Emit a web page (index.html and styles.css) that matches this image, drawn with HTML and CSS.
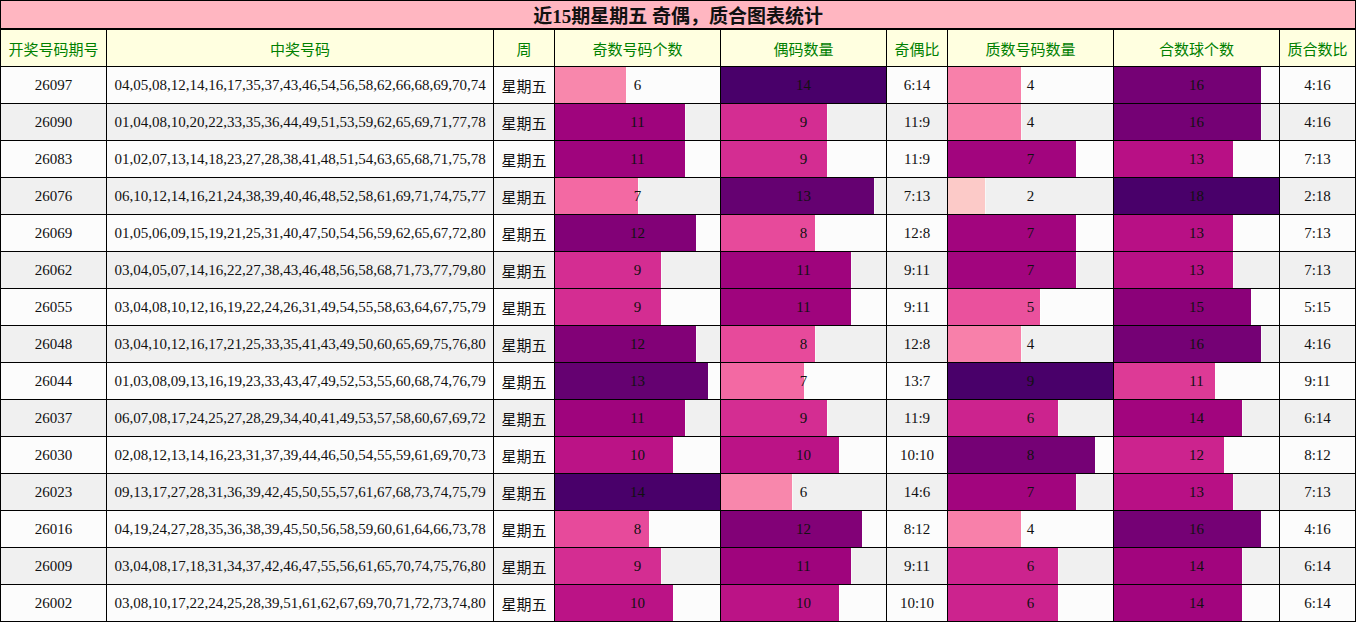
FILE: index.html
```html
<!DOCTYPE html>
<html lang="zh-CN">
<head>
<meta charset="utf-8">
<title>近15期星期五 奇偶，质合图表统计</title>
<link rel="stylesheet" href="styles.css">
</head>
<body>
<table class="stats">
  <colgroup>
    <col class="c-issue"><col class="c-nums"><col class="c-week"><col class="c-bar"><col class="c-bar"><col class="c-ratio"><col class="c-bar"><col class="c-bar"><col class="c-ratio2">
  </colgroup>
  <thead>
    <tr class="title-row"><th colspan="9" class="title">近15期星期五 奇偶，质合图表统计</th></tr>
    <tr class="head-row">
      <th>开奖号码期号</th><th>中奖号码</th><th>周</th><th>奇数号码个数</th><th>偶码数量</th><th>奇偶比</th><th>质数号码数量</th><th>合数球个数</th><th>质合数比</th>
    </tr>
  </thead>
  <tbody>
    <tr><td>26097</td><td>04,05,08,12,14,16,17,35,37,43,46,54,56,58,62,66,68,69,70,74</td><td class="wk">星期五</td>
      <td class="bar" style="--p:42.857%;--c:#f887ac">6</td><td class="bar" style="--p:100%;--c:#49006a">14</td><td>6:14</td>
      <td class="bar" style="--p:44.444%;--c:#f880aa">4</td><td class="bar" style="--p:88.889%;--c:#750175">16</td><td>4:16</td></tr>
    <tr><td>26090</td><td>01,04,08,10,20,22,33,35,36,44,49,51,53,59,62,65,69,71,77,78</td><td class="wk">星期五</td>
      <td class="bar" style="--p:78.571%;--c:#9f047d">11</td><td class="bar" style="--p:64.286%;--c:#d42d92">9</td><td>11:9</td>
      <td class="bar" style="--p:44.444%;--c:#f880aa">4</td><td class="bar" style="--p:88.889%;--c:#750175">16</td><td>4:16</td></tr>
    <tr><td>26083</td><td>01,02,07,13,14,18,23,27,28,38,41,48,51,54,63,65,68,71,75,78</td><td class="wk">星期五</td>
      <td class="bar" style="--p:78.571%;--c:#9f047d">11</td><td class="bar" style="--p:64.286%;--c:#d42d92">9</td><td>11:9</td>
      <td class="bar" style="--p:77.778%;--c:#a2057e">7</td><td class="bar" style="--p:72.222%;--c:#b81085">13</td><td>7:13</td></tr>
    <tr><td>26076</td><td>06,10,12,14,16,21,24,38,39,40,46,48,52,58,61,69,71,74,75,77</td><td class="wk">星期五</td>
      <td class="bar" style="--p:50%;--c:#f369a3">7</td><td class="bar" style="--p:92.857%;--c:#650171">13</td><td>7:13</td>
      <td class="bar" style="--p:22.222%;--c:#fccac8">2</td><td class="bar" style="--p:100%;--c:#49006a">18</td><td>2:18</td></tr>
    <tr><td>26069</td><td>01,05,06,09,15,19,21,25,31,40,47,50,54,56,59,62,65,67,72,80</td><td class="wk">星期五</td>
      <td class="bar" style="--p:85.714%;--c:#820177">12</td><td class="bar" style="--p:57.143%;--c:#e74a9b">8</td><td>12:8</td>
      <td class="bar" style="--p:77.778%;--c:#a2057e">7</td><td class="bar" style="--p:72.222%;--c:#b81085">13</td><td>7:13</td></tr>
    <tr><td>26062</td><td>03,04,05,07,14,16,22,27,38,43,46,48,56,58,68,71,73,77,79,80</td><td class="wk">星期五</td>
      <td class="bar" style="--p:64.286%;--c:#d42d92">9</td><td class="bar" style="--p:78.571%;--c:#9f047d">11</td><td>9:11</td>
      <td class="bar" style="--p:77.778%;--c:#a2057e">7</td><td class="bar" style="--p:72.222%;--c:#b81085">13</td><td>7:13</td></tr>
    <tr><td>26055</td><td>03,04,08,10,12,16,19,22,24,26,31,49,54,55,58,63,64,67,75,79</td><td class="wk">星期五</td>
      <td class="bar" style="--p:64.286%;--c:#d42d92">9</td><td class="bar" style="--p:78.571%;--c:#9f047d">11</td><td>9:11</td>
      <td class="bar" style="--p:55.556%;--c:#ea519d">5</td><td class="bar" style="--p:83.333%;--c:#8b0179">15</td><td>5:15</td></tr>
    <tr><td>26048</td><td>03,04,10,12,16,17,21,25,33,35,41,43,49,50,60,65,69,75,76,80</td><td class="wk">星期五</td>
      <td class="bar" style="--p:85.714%;--c:#820177">12</td><td class="bar" style="--p:57.143%;--c:#e74a9b">8</td><td>12:8</td>
      <td class="bar" style="--p:44.444%;--c:#f880aa">4</td><td class="bar" style="--p:88.889%;--c:#750175">16</td><td>4:16</td></tr>
    <tr><td>26044</td><td>01,03,08,09,13,16,19,23,33,43,47,49,52,53,55,60,68,74,76,79</td><td class="wk">星期五</td>
      <td class="bar" style="--p:92.857%;--c:#650171">13</td><td class="bar" style="--p:50%;--c:#f369a3">7</td><td>13:7</td>
      <td class="bar" style="--p:100%;--c:#49006a">9</td><td class="bar" style="--p:61.111%;--c:#dd3a96">11</td><td>9:11</td></tr>
    <tr><td>26037</td><td>06,07,08,17,24,25,27,28,29,34,40,41,49,53,57,58,60,67,69,72</td><td class="wk">星期五</td>
      <td class="bar" style="--p:78.571%;--c:#9f047d">11</td><td class="bar" style="--p:64.286%;--c:#d42d92">9</td><td>11:9</td>
      <td class="bar" style="--p:66.667%;--c:#cc238e">6</td><td class="bar" style="--p:77.778%;--c:#a2057e">14</td><td>6:14</td></tr>
    <tr><td>26030</td><td>02,08,12,13,14,16,23,31,37,39,44,46,50,54,55,59,61,69,70,73</td><td class="wk">星期五</td>
      <td class="bar" style="--p:71.429%;--c:#bb1386">10</td><td class="bar" style="--p:71.429%;--c:#bb1386">10</td><td>10:10</td>
      <td class="bar" style="--p:88.889%;--c:#750175">8</td><td class="bar" style="--p:66.667%;--c:#cc238e">12</td><td>8:12</td></tr>
    <tr><td>26023</td><td>09,13,17,27,28,31,36,39,42,45,50,55,57,61,67,68,73,74,75,79</td><td class="wk">星期五</td>
      <td class="bar" style="--p:100%;--c:#49006a">14</td><td class="bar" style="--p:42.857%;--c:#f887ac">6</td><td>14:6</td>
      <td class="bar" style="--p:77.778%;--c:#a2057e">7</td><td class="bar" style="--p:72.222%;--c:#b81085">13</td><td>7:13</td></tr>
    <tr><td>26016</td><td>04,19,24,27,28,35,36,38,39,45,50,56,58,59,60,61,64,66,73,78</td><td class="wk">星期五</td>
      <td class="bar" style="--p:57.143%;--c:#e74a9b">8</td><td class="bar" style="--p:85.714%;--c:#820177">12</td><td>8:12</td>
      <td class="bar" style="--p:44.444%;--c:#f880aa">4</td><td class="bar" style="--p:88.889%;--c:#750175">16</td><td>4:16</td></tr>
    <tr><td>26009</td><td>03,04,08,17,18,31,34,37,42,46,47,55,56,61,65,70,74,75,76,80</td><td class="wk">星期五</td>
      <td class="bar" style="--p:64.286%;--c:#d42d92">9</td><td class="bar" style="--p:78.571%;--c:#9f047d">11</td><td>9:11</td>
      <td class="bar" style="--p:66.667%;--c:#cc238e">6</td><td class="bar" style="--p:77.778%;--c:#a2057e">14</td><td>6:14</td></tr>
    <tr><td>26002</td><td>03,08,10,17,22,24,25,28,39,51,61,62,67,69,70,71,72,73,74,80</td><td class="wk">星期五</td>
      <td class="bar" style="--p:71.429%;--c:#bb1386">10</td><td class="bar" style="--p:71.429%;--c:#bb1386">10</td><td>10:10</td>
      <td class="bar" style="--p:66.667%;--c:#cc238e">6</td><td class="bar" style="--p:77.778%;--c:#a2057e">14</td><td>6:14</td></tr>
  </tbody>
</table>
</body>
</html>
```

FILE: styles.css
```css
html, body {
  margin: 0;
  padding: 0;
  background: #ffffff;
}

body {
  font-family: "Liberation Serif", "Noto Sans CJK SC", serif;
  font-size: 15px;
  color: #111;
}

.stats {
  width: 1356px;
  table-layout: fixed;
  border-collapse: separate;
  border-spacing: 0;
  border-left: 1px solid #000;
  border-top: 1px solid #000;
}

.c-issue { width: 106px; }
.c-nums { width: 387px; }
.c-week { width: 61px; }
.c-bar { width: 166px; }
.c-ratio { width: 61px; }
.c-ratio2 { width: 76px; }

.stats th,
.stats td {
  padding: 0;
  border-right: 1px solid #000;
  border-bottom: 1px solid #000;
  text-align: center;
  vertical-align: middle;
  white-space: nowrap;
  overflow: hidden;
}

.title-row {
  height: 29px;
}

.stats .title {
  background: #ffb6c1;
  font-size: 19px;
  font-weight: bold;
  color: #111;
  border-bottom: 2px solid #000;
}

.head-row {
  height: 37px;
}

.head-row th {
  background: #ffffe0;
  color: #008000;
  font-weight: normal;
  font-family: "Noto Sans CJK SC", sans-serif;
  font-size: 15px;
}

.stats tbody tr {
  height: 37px;
  background: #fcfcfc;
}

.stats tbody tr:nth-child(even) {
  background: #f0f0f0;
}

.stats .wk {
  font-family: "Noto Sans CJK SC", sans-serif;
}

.stats .bar {
  background-image: linear-gradient(to right,
    var(--c) var(--p),
    rgba(255, 255, 255, 0.55) var(--p),
    rgba(255, 255, 255, 0.55) calc(var(--p) + 1px),
    transparent calc(var(--p) + 1px));
  background-repeat: no-repeat;
}
```
